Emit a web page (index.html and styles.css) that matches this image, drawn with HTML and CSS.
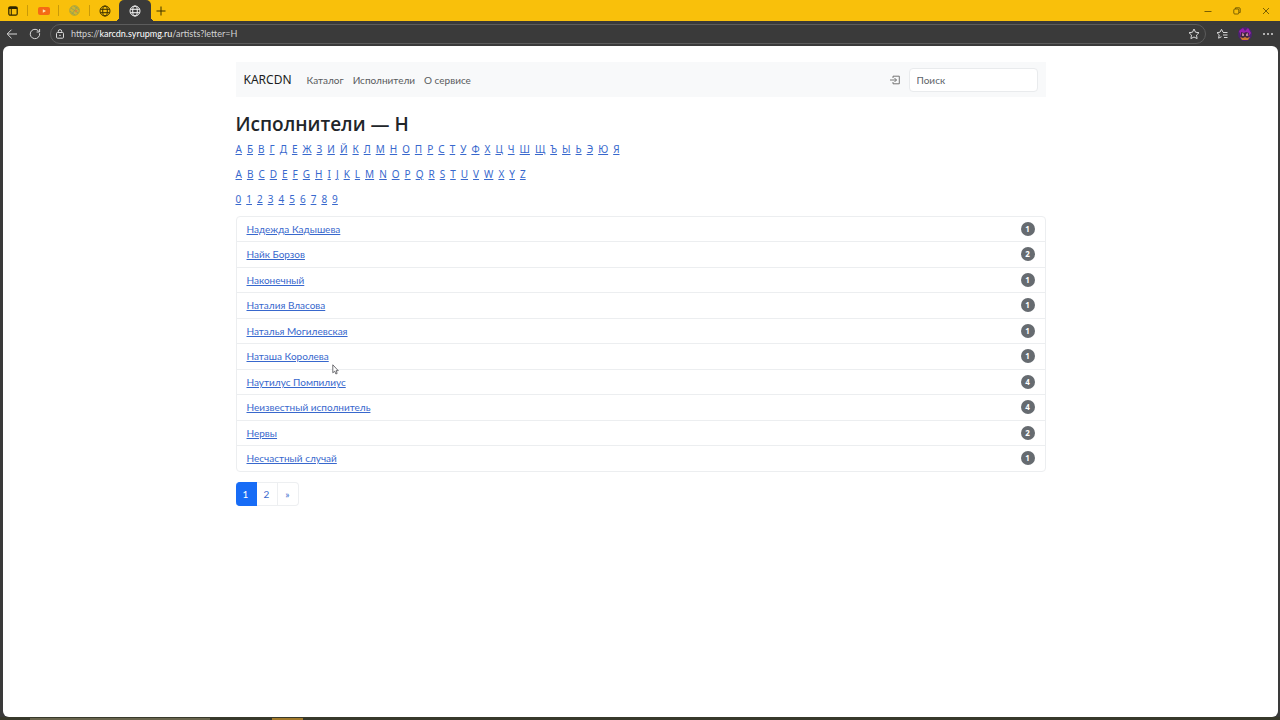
FILE: index.html
```html
<!DOCTYPE html>
<html lang="ru">
<head>
<meta charset="utf-8">
<meta name="viewport" content="width=device-width, initial-scale=1">
<title>Исполнители — Н</title>
<link rel="stylesheet" href="styles.css">
</head>
<body>
<div class="browser">
  <header class="tabs">
    <button class="tab tab-menu" aria-label="Меню вкладок"><svg width="10" height="10" viewBox="0 0 10 10"><rect x=".8" y=".8" width="8.4" height="8.4" rx="1.5" fill="none" stroke="#2b2400" stroke-width="1.2"/><path d="M.8 2h8.4" stroke="#2b2400" stroke-width="2"/><path d="M3.300 3v6" stroke="#2b2400"/></svg></button>
    <button class="tab" aria-label="Видео"><svg width="12" height="8" viewBox="0 0 12 8"><rect width="12" height="8" rx="2" fill="#f56a14"/><path d="M4.8 2.2v3.6L8 4z" fill="#ffe9b0"/></svg></button>
    <button class="tab" aria-label="Вкладка"><svg width="11" height="11" viewBox="0 0 11 11"><circle cx="5.5" cy="5.5" r="4.8" fill="#d4b52a" stroke="#a8a33f"/><path d="M2 3l7 5M1 6l5 4M5 1l5 4M8 2L3 9" stroke="#8aa05c" stroke-width=".8"/><circle cx="7" cy="6" r="1.3" fill="#dc8d32"/></svg></button>
    <button class="tab tab-last" aria-label="Сайт"><svg class="globe" width="12" height="12" viewBox="0 0 12 12"><circle cx="6" cy="6" r="5"/><ellipse cx="6" cy="6" rx="2.3" ry="5"/><path d="M1.4 4.3h9.2M1.4 7.7h9.2"/></svg></button>
    <button class="tab tab-active" aria-label="Исполнители"><svg class="globe" width="12" height="12" viewBox="0 0 12 12"><circle cx="6" cy="6" r="5"/><ellipse cx="6" cy="6" rx="2.3" ry="5"/><path d="M1.4 4.3h9.2M1.4 7.7h9.2"/></svg></button>
    <button class="tab-new" aria-label="Новая вкладка"><svg width="10" height="10" viewBox="0 0 10 10"><path d="M5 .5v9M.5 5h9" stroke="#3d3200"/></svg></button>
    <div class="window-buttons">
      <button aria-label="Свернуть"><svg width="8" height="8" viewBox="0 0 8 8"><path d="M.5 4.5h7"/></svg></button>
      <button aria-label="Развернуть"><svg width="8" height="8" viewBox="0 0 8 8"><rect x=".8" y="2" width="5" height="5" rx="1"/><path d="M2.5 1.8V.8h3.7q1 0 1 1v3.7h-1"/></svg></button>
      <button aria-label="Закрыть"><svg width="8" height="8" viewBox="0 0 8 8"><path d="M1 1l6 6M7 1L1 7"/></svg></button>
    </div>
  </header>
  <div class="toolbar">
    <button aria-label="Назад"><svg width="12" height="12" viewBox="0 0 12 12"><path d="M11 6H1.5M5.5 1.7L1.2 6l4.3 4.3"/></svg></button>
    <button aria-label="Обновить"><svg width="12" height="12" viewBox="0 0 12 12"><path d="M10.6 5.2A4.7 4.7 0 1 1 9 2.4L10.6 4M10.6 1v3h-3"/></svg></button>
    <div class="address">
      <svg width="10" height="10" viewBox="0 0 10 10"><rect x="1.5" y="3.5" width="7" height="5.7" rx="1"/><path d="M3.3 3.5V2.3a1.7 1.7 0 0 1 3.4 0v1.2"/><circle cx="5" cy="6.3" r=".4"/></svg>
      <span class="url">https://<b>karcdn.syrupmg.ru</b>/artists?letter=Н</span>
      <button aria-label="В избранное"><svg width="12" height="12" viewBox="0 0 12 12"><path d="M6 1l1.5 3.2 3.5.5-2.5 2.4.6 3.5L6 9l-3.1 1.6.6-3.5L1 4.7l3.5-.5z"/></svg></button>
    </div>
    <button aria-label="Избранное"><svg width="12" height="12" viewBox="0 0 12 12"><path d="M7 4.2L5.5 1.3 4 4.2l-3 .5 2.2 2.1-.6 3.4 2.9-1.5M7 4.5h4.5M7 7h4.5M8 9.5h3.5"/></svg></button>
    <button aria-label="Профиль"><svg class="avatar" width="14" height="14" viewBox="0 0 14 14"><circle cx="7" cy="7" r="7" fill="#4b2370"/><path d="M1 4l4-3 2 3 3-3 3 5-2 3H3z" fill="#9a1fae"/><path d="M3 5l3 1 2-1 3 1-1 5-3 2-4-3z" fill="#402640"/><path d="M4 6l2 1v2H4zm4 1l2-1v3H8z" fill="#b98297"/><path d="M2 10l3 1 2-1 2 1 3-1-2 3H4z" fill="#d07c30"/></svg></button>
    <button aria-label="Настройки"><svg width="12" height="12" viewBox="0 0 12 12"><path d="M1 6h2M5 6h2M9 6h2" stroke-width="1.6"/></svg></button>
  </div>
  <div class="page">
    <div class="container">
      <nav class="navbar">
        <a class="brand" href="#">KARCDN</a>
        <a class="nav-link" href="#">Каталог</a>
        <a class="nav-link" href="#">Исполнители</a>
        <a class="nav-link" href="#">О сервисе</a>
        <form class="search">
          <a class="login" href="#" aria-label="Войти"><svg width="10" height="10" viewBox="0 0 10 10"><path d="M3 3V1.200h6.300v7.600H3V7M0 5h6.500M4.500 3l2 2-2 2"/></svg></a>
          <input type="search" placeholder="Поиск" aria-label="Поиск">
        </form>
      </nav>
      <main>
        <h1>Исполнители — Н</h1>
        <div class="letters"><a href="#">А</a><a href="#">Б</a><a href="#">В</a><a href="#">Г</a><a href="#">Д</a><a href="#">Е</a><a href="#">Ж</a><a href="#">З</a><a href="#">И</a><a href="#">Й</a><a href="#">К</a><a href="#">Л</a><a href="#">М</a><a href="#">Н</a><a href="#">О</a><a href="#">П</a><a href="#">Р</a><a href="#">С</a><a href="#">Т</a><a href="#">У</a><a href="#">Ф</a><a href="#">Х</a><a href="#">Ц</a><a href="#">Ч</a><a href="#">Ш</a><a href="#">Щ</a><a href="#">Ъ</a><a href="#">Ы</a><a href="#">Ь</a><a href="#">Э</a><a href="#">Ю</a><a href="#">Я</a></div>
        <div class="letters"><a href="#">A</a><a href="#">B</a><a href="#">C</a><a href="#">D</a><a href="#">E</a><a href="#">F</a><a href="#">G</a><a href="#">H</a><a href="#">I</a><a href="#">J</a><a href="#">K</a><a href="#">L</a><a href="#">M</a><a href="#">N</a><a href="#">O</a><a href="#">P</a><a href="#">Q</a><a href="#">R</a><a href="#">S</a><a href="#">T</a><a href="#">U</a><a href="#">V</a><a href="#">W</a><a href="#">X</a><a href="#">Y</a><a href="#">Z</a></div>
        <div class="letters"><a href="#">0</a><a href="#">1</a><a href="#">2</a><a href="#">3</a><a href="#">4</a><a href="#">5</a><a href="#">6</a><a href="#">7</a><a href="#">8</a><a href="#">9</a></div>
        <ul class="artists">
          <li><a href="#">Надежда Кадышева</a><span class="badge">1</span></li>
          <li><a href="#">Найк Борзов</a><span class="badge">2</span></li>
          <li><a href="#">Наконечный</a><span class="badge">1</span></li>
          <li><a href="#">Наталия Власова</a><span class="badge">1</span></li>
          <li><a href="#">Наталья Могилевская</a><span class="badge">1</span></li>
          <li><a href="#">Наташа Королева</a><span class="badge">1</span></li>
          <li><a href="#">Наутилус Помпилиус</a><span class="badge">4</span></li>
          <li><a href="#">Неизвестный исполнитель</a><span class="badge">4</span></li>
          <li><a href="#">Нервы</a><span class="badge">2</span></li>
          <li><a href="#">Несчастный случай</a><span class="badge">1</span></li>
        </ul>
        <nav class="pagination" aria-label="Страницы"><a class="current" href="#">1</a><a href="#">2</a><a href="#">»</a></nav>
      </main>
    </div>
  </div>
  <footer class="taskbar"><span class="task-wide"></span><span class="task-accent"></span></footer>
</div>
<svg class="cursor" width="7" height="11" viewBox="0 0 7 11"><path d="M.8.8v8l1.900-1.600 1.200 2.800 1.300-.6L4 6.700h2.300z" fill="#fff" stroke="#4b4b50" stroke-width=".8"/></svg>
</body>
</html>
```
FILE: styles.css
```css
* { box-sizing: border-box; }
body {
  margin: 0;
  font-family: Lato, "Noto Sans", sans-serif;
  font-size: 10px;
  line-height: 16px;
  color: #212529;
}
button {
  display: flex;
  align-items: center;
  justify-content: center;
  padding: 0;
  border: 0;
  background: none;
}
svg { display: block; flex: none; }
.browser {
  display: flex;
  flex-direction: column;
  min-height: 100vh;
  background: #3a3a3a;
}

/* Tab strip */
.tabs {
  display: flex;
  height: 21px;
  background: #f9c00b;
}
.tab {
  position: relative;
  width: 31px;
  height: 21px;
}
.tab:not(.tab-last):not(.tab-active)::after {
  content: "";
  position: absolute;
  right: 0;
  top: 5px;
  width: 1px;
  height: 11px;
  background: #c99a08;
}
.tab-menu { width: 28px; padding-right: 3px; }
.tab-last { width: 29px; }
.tab-active {
  width: 32px;
  border-radius: 5px 5px 0 0;
  background: #3a3a3a;
}
.tab-active::before {
  content: "";
  position: absolute;
  left: -4px;
  right: -4px;
  bottom: 0;
  height: 4px;
  background:
    radial-gradient(circle at 0 0, transparent 4px, #3a3a3a 4px) left / 4px 4px no-repeat,
    radial-gradient(circle at 100% 0, transparent 4px, #3a3a3a 4px) right / 4px 4px no-repeat;
}
.tab-new { width: 20px; }
.globe { fill: none; stroke: #3d3200; }
.tab-active .globe { stroke: #f2f2f2; }
.window-buttons { display: flex; margin-left: auto; }
.window-buttons button { width: 29px; }
.window-buttons svg { fill: none; stroke: #5b4700; stroke-width: 0.8; }

/* Toolbar */
.toolbar {
  display: flex;
  height: 25px;
  align-items: center;
  padding-right: 1px;
  color: #e6e6e6;
}
.toolbar button { width: 23px; }
.toolbar svg:not(.avatar) { fill: none; stroke: #d8d8d8; }
.address {
  display: flex;
  flex: 1;
  align-items: center;
  height: 20px;
  margin: 0 4px;
  padding-left: 4px;
  border: 1px solid #5c5c5c;
  border-radius: 10px;
}
.url { flex: 1; padding-left: 6px; font-size: 9px; color: #d2d2d2; }
.url b { font-weight: 400; color: #fff; }

/* Page */
.page {
  flex: 1;
  margin: 0 2px 0 3px;
  border-radius: 6px;
  background: #fff;
}
.container {
  max-width: 810px;
  margin: 0 auto;
  padding-top: 16px;
}
.navbar {
  display: flex;
  align-items: center;
  height: 35px;
  padding: 0 8px;
  background: #f8f9fa;
}
.brand { margin-right: 10px; font-family: "Noto Sans", sans-serif; font-size: 12px; color: #1b1e21; text-decoration: none; }
.nav-link { padding: 0 4px 0 5px; color: #595b5d; text-decoration: none; }
.search { display: flex; align-items: center; gap: 9px; margin-left: auto; }
.login svg { fill: none; stroke: #666; stroke-width: 0.9; }
.search input {
  width: 129px;
  height: 24px;
  padding: 0 7px;
  border: 1px solid #e9ebed;
  border-radius: 4px;
  background: #fff;
  font: inherit;
}
.search input::placeholder { color: #5d6369; opacity: 1; }
h1 {
  margin: 15px 0 5px;
  font-family: "Open Sans", "Noto Sans", sans-serif;
  font-size: 19px;
  font-weight: 600;
  line-height: 24px;
}
.letters {
  display: flex;
  flex-wrap: wrap;
  gap: 5px;
  margin-bottom: 9px;
  font-family: "Noto Sans", sans-serif;
}
a { color: #3868cd; text-underline-offset: 1px; }
.artists {
  margin: 0;
  padding: 0;
  border: 1px solid #eceef0;
  border-radius: 4px;
  list-style: none;
}
.artists li {
  display: flex;
  align-items: center;
  justify-content: space-between;
  padding: 4px 10px;
}
.artists li + li { border-top: 1px solid #eceef0; }
.artists li:nth-child(even) { padding-bottom: 5px; }
.badge {
  min-width: 14px;
  height: 14px;
  border-radius: 7px;
  background: #666b70;
  color: #fff;
  font-family: "Noto Sans", sans-serif;
  font-size: 8px;
  font-weight: 700;
  line-height: 14px;
  text-align: center;
}
.pagination { display: flex; margin-top: 10px; }
.pagination a {
  width: 21px;
  padding: 3px 0;
  border: 1px solid #edeff1;
  border-left: 0;
  text-align: center;
  text-decoration: none;
}
.pagination a:last-child { border-radius: 0 4px 4px 0; }
.pagination .current {
  border-color: #176cf6;
  border-radius: 4px 0 0 4px;
  background: #176cf6;
  color: #fff;
}

/* Desktop edge */
.taskbar { display: flex; height: 3px; padding: 1px 0 0 30px; background: #38392b; }
.task-wide { width: 180px; background: #68654d; }
.task-accent { width: 31px; margin-left: 62px; background: #a1792a; }
.cursor { position: absolute; left: 332px; top: 364px; }
```
